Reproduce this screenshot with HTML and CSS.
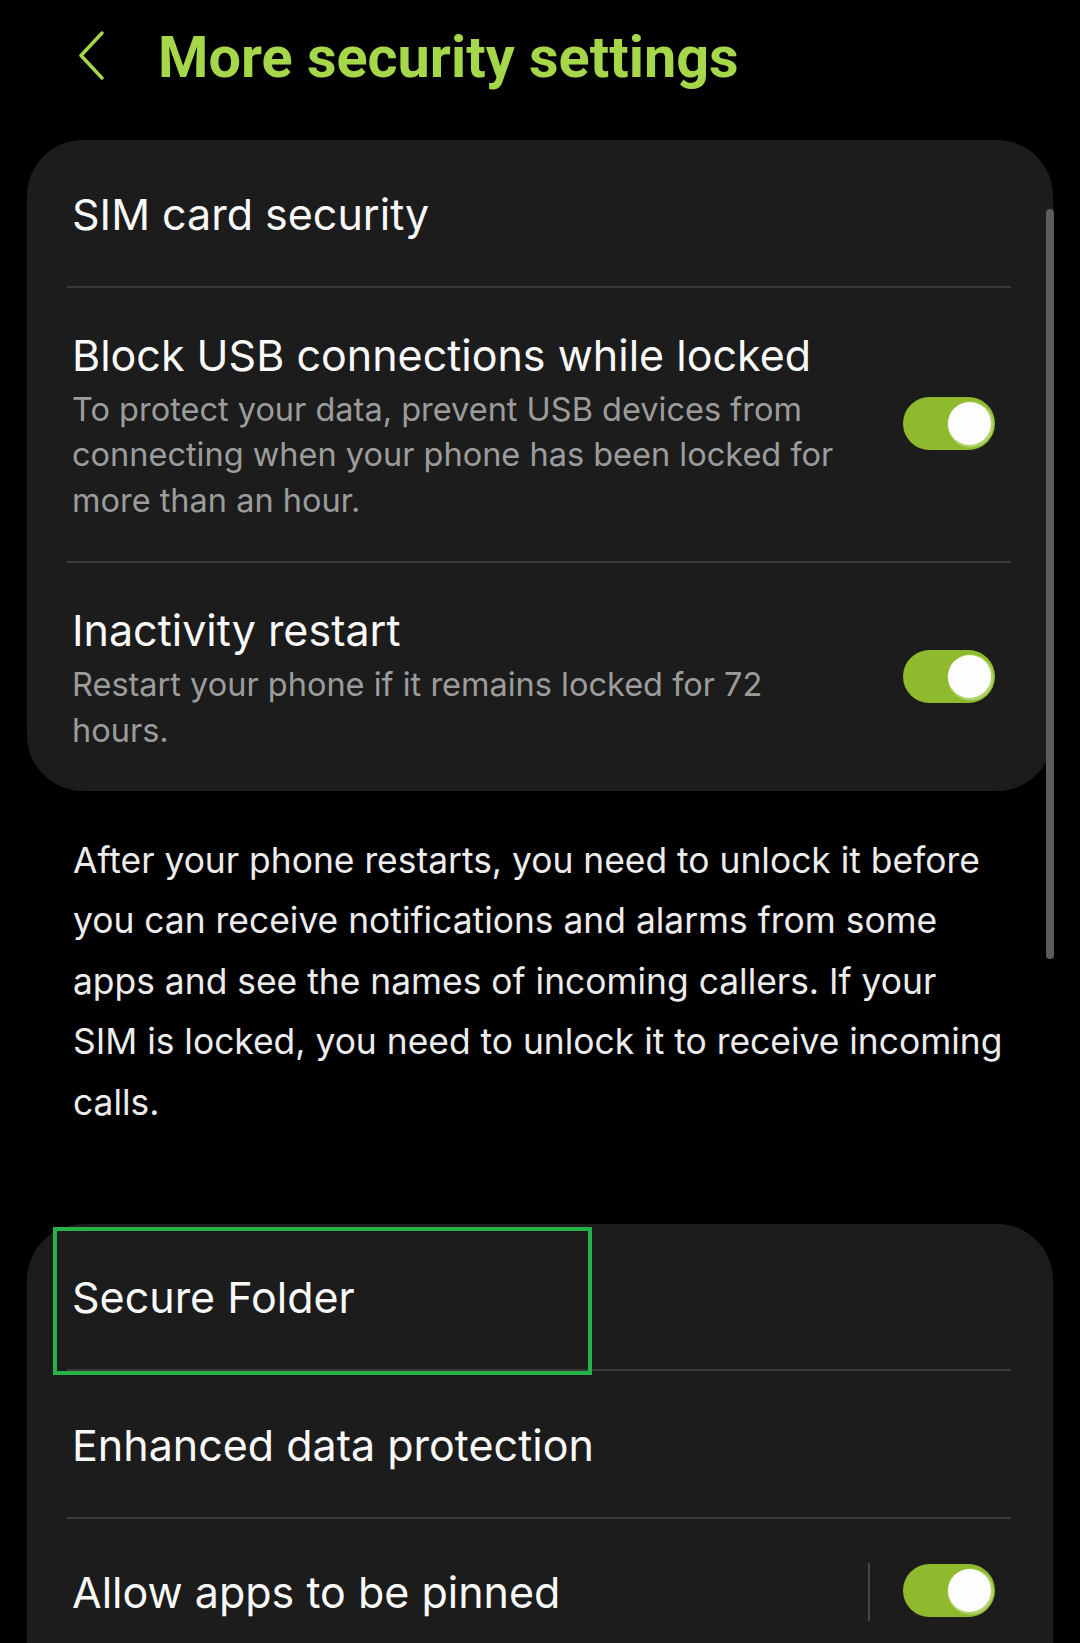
FILE: index.html
```html
<!DOCTYPE html>
<html lang="en">
<head>
<meta charset="utf-8">
<title>More security settings</title>
<link rel="stylesheet" href="styles.css">
</head>
<body>
<div class="screen">
  <header class="appbar">
    <button class="back" aria-label="Back">
      <svg width="30" height="52" viewBox="0 0 30 52"><polyline points="24,2 3,24.5 24,47" fill="none" stroke="#a6d64a" stroke-width="3.4" stroke-linecap="round" stroke-linejoin="round"/></svg>
    </button>
    <h1 class="title">More security settings</h1>
  </header>

  <section class="card">
    <div class="row"><div class="row-title">SIM card security</div></div>
    <div class="divider"></div>
    <div class="row row-toggle">
      <div class="row-text">
        <div class="row-title">Block USB connections while locked</div>
        <div class="row-sub">To protect your data, prevent USB devices from connecting when your phone has been locked for more than an hour.</div>
      </div>
      <div class="switch on"><span class="knob"></span></div>
    </div>
    <div class="divider"></div>
    <div class="row row-toggle">
      <div class="row-text">
        <div class="row-title">Inactivity restart</div>
        <div class="row-sub">Restart your phone if it remains locked for 72 hours.</div>
      </div>
      <div class="switch on"><span class="knob"></span></div>
    </div>
  </section>

  <p class="note">After your phone restarts, you need to unlock it before you can receive notifications and alarms from some apps and see the names of incoming callers. If your SIM is locked, you need to unlock it to receive incoming calls.</p>

  <section class="card card-second">
    <div class="focus-ring"></div>
    <div class="row"><div class="row-title">Secure Folder</div></div>
    <div class="divider"></div>
    <div class="row"><div class="row-title">Enhanced data protection</div></div>
    <div class="divider"></div>
    <div class="row row-split">
      <div class="row-text"><div class="row-title">Allow apps to be pinned</div></div>
      <div class="vsep"></div>
      <div class="switch on"><span class="knob"></span></div>
    </div>
  </section>

  <div class="scrollbar"></div>
</div>
</body>
</html>
```
FILE: styles.css
```css
html, body {
  margin: 0;
  padding: 0;
  background: #000;
}
.screen {
  position: relative;
  width: 1080px;
  height: 1643px;
  overflow: hidden;
  background: #000;
  font-family: Inter, "Noto Sans", sans-serif;
  color: #f7f7f7;
}
.appbar {
  display: flex;
  align-items: flex-start;
  height: 140px;
  box-sizing: border-box;
  padding: 24px 0 0 78px;
}
.back {
  width: 30px;
  height: 52px;
  margin-top: 7px;
  padding: 0;
  border: 0;
  background: none;
  display: block;
}
.back svg { display: block; }
.title {
  margin: 0 0 0 50px;
  font-family: Roboto, "Liberation Sans", sans-serif;
  font-weight: 700;
  font-size: 57.6px;
  line-height: 67px;
  color: #a6d64a;
  letter-spacing: 0;
}
.card {
  position: relative;
  margin: 0 27px;
  background: #1c1c1c;
  border-radius: 56px;
}
.row {
  padding: 47.5px 58px 46px 45px;
}
.row-title {
  font-size: 43px;
  line-height: 52px;
  color: #f8f8f8;
  white-space: nowrap;
}
.row-toggle {
  display: flex;
  align-items: center;
  gap: 58px;
  padding: 41px 58px 38px 45px;
}
.row-toggle .switch {
  margin-bottom: 5px;
}
.row-text {
  flex: 1;
  min-width: 0;
}
.row-sub {
  margin-top: 6px;
  font-size: 32.5px;
  line-height: 45.5px;
  color: #9c9c9c;
}
.divider {
  height: 2px;
  margin: 0 42px 0 40px;
  background: #393939;
}
.switch {
  position: relative;
  flex: none;
  width: 92px;
  height: 53px;
  border-radius: 27px;
  background: #8fba2e;
}
.knob {
  position: absolute;
  left: 45px;
  top: 5px;
  width: 43px;
  height: 43px;
  border-radius: 50%;
  background: #fdfdfd;
  box-shadow: 1px 1px 0 1.5px #b2d26c;
}
.note {
  margin: 39.5px 0 0;
  padding: 0 75px 0 73px;
  font-size: 35.4px;
  line-height: 60.5px;
  color: #ececec;
}
.card-second {
  margin-top: 90.5px;
  padding-bottom: 40px;
}
.row-split {
  display: flex;
  align-items: center;
  padding-top: 44px;
  padding-bottom: 49px;
}
.row-split .switch {
  margin-bottom: 2px;
}
.vsep {
  flex: none;
  width: 2px;
  height: 58px;
  margin-right: 33px;
  background: #464646;
}
.focus-ring {
  position: absolute;
  left: 26px;
  top: 3px;
  width: 539px;
  height: 148px;
  box-sizing: border-box;
  border: 4px solid #26b14b;
  z-index: 2;
  pointer-events: none;
}
.scrollbar {
  position: absolute;
  left: 1046px;
  top: 209px;
  width: 8px;
  height: 750px;
  border-radius: 4px;
  background: #5c5c5c;
}
```
